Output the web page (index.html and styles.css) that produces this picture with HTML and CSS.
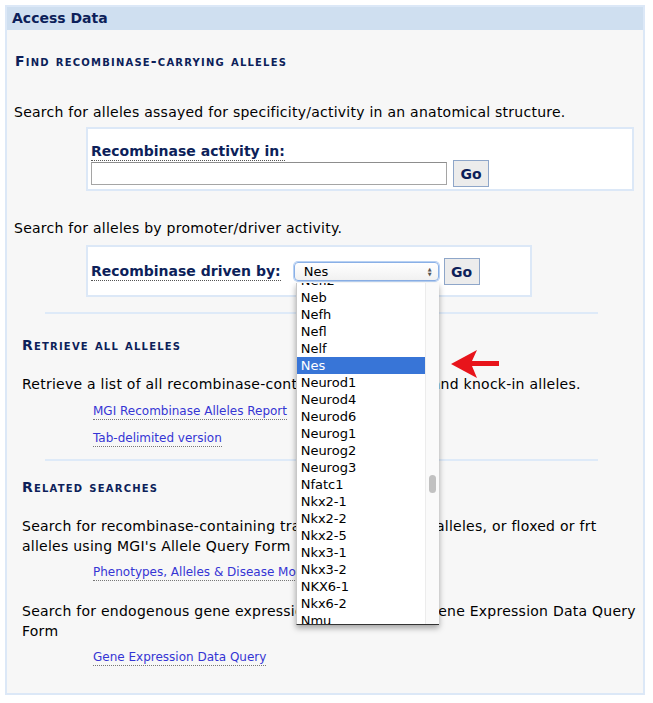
FILE: index.html
```html
<!DOCTYPE html>
<html>
<head>
<meta charset="utf-8">
<link rel="stylesheet" href="styles.css">
</head>
<body>
<div class="panel">
  <div class="panel-head">Access Data</div>
  <div class="panel-body">
    <div class="section first">
      <h3 class="sc">Find recombinase-carrying alleles</h3>
      <p class="para p1">Search for alleles assayed for specificity/activity in an anatomical structure.</p>
      <div class="qbox box1">
        <div class="lbl">Recombinase activity in:</div>
        <div class="row">
          <span class="textin"></span>
          <span class="btn">Go</span>
        </div>
      </div>
      <p class="para p2">Search for alleles by promoter/driver activity.</p>
      <div class="qbox box2">
        <div class="row">
          <span class="lbl inline">Recombinase driven by:</span>
          <span class="selwrap">
            <span class="select"><span class="selval">Nes</span><span class="updown">&#9650;<br>&#9660;</span></span>
            <span class="popup">
              <span class="list">
                <span class="opt">Nefl2</span>
                <span class="opt">Neb</span>
                <span class="opt">Nefh</span>
                <span class="opt">Nefl</span>
                <span class="opt">Nelf</span>
                <span class="opt sel">Nes</span>
                <span class="opt">Neurod1</span>
                <span class="opt">Neurod4</span>
                <span class="opt">Neurod6</span>
                <span class="opt">Neurog1</span>
                <span class="opt">Neurog2</span>
                <span class="opt">Neurog3</span>
                <span class="opt">Nfatc1</span>
                <span class="opt">Nkx2-1</span>
                <span class="opt">Nkx2-2</span>
                <span class="opt">Nkx2-5</span>
                <span class="opt">Nkx3-1</span>
                <span class="opt">Nkx3-2</span>
                <span class="opt">NKX6-1</span>
                <span class="opt">Nkx6-2</span>
                <span class="opt">Nmu</span>
              </span>
              <span class="track"><span class="thumb"></span></span>
            </span>
            <svg class="arrow" width="48" height="28" viewBox="0 0 48 28"><polygon points="0,14 26,0 21,11 48,11 48,16 21,16 26,28" fill="#e8141b"/></svg>
          </span>
          <span class="btn">Go</span>
        </div>
      </div>
    </div>
    <div class="divider"></div>
    <div class="section">
      <h3 class="sc">Retrieve all alleles</h3>
      <p class="para p3">Retrieve a list of all recombinase-containing transgenes and knock-in alleles.</p>
      <div class="links l1">
        <a class="lnk">MGI Recombinase Alleles Report</a>
        <a class="lnk">Tab-delimited version</a>
      </div>
    </div>
    <div class="divider d2"></div>
    <div class="section">
      <h3 class="sc">Related searches</h3>
      <p class="para p4">Search for recombinase-containing transgenes, knock-in alleles, or floxed or frt alleles using MGI's Allele Query Form</p>
      <div class="links">
        <a class="lnk">Phenotypes, Alleles &amp; Disease Models Search</a>
      </div>
      <p class="para p5">Search for endogenous gene expression data using the Gene Expression Data Query Form</p>
      <div class="links">
        <a class="lnk">Gene Expression Data Query</a>
      </div>
    </div>
  </div>
</div>
</body>
</html>
```
FILE: styles.css
```css
* { box-sizing: border-box; }
body {
  margin: 0;
  background: #ffffff;
  font-family: "DejaVu Sans", Verdana, sans-serif;
  color: #111;
}
.panel {
  margin: 5px 0 0 5px;
  width: 640px;
  height: 690px;
  border: 2px solid #dce8f7;
  background: #f7f7f7;
}
.panel-head {
  height: 23px;
  background: #cfdff0;
  color: #0d1f5a;
  font-weight: bold;
  font-size: 14px;
  line-height: 23px;
  padding-left: 5px;
}
.panel-body { padding: 0 7px; }
.section { padding-left: 8px; }
.section.first { padding-left: 1px; }
h3.sc {
  margin: 0;
  font-variant: small-caps;
  font-size: 14px;
  line-height: 17px;
  font-weight: bold;
  color: #0d1f5a;
  letter-spacing: 1.2px;
}
.first h3.sc { margin-top: 23px; }
.para {
  margin: 0;
  font-size: 14px;
  line-height: 20px;
  letter-spacing: 0.25px;
  color: #000;
}
.p1 { margin-top: 32px; margin-left: -1px; }
.qbox {
  margin-left: 71px;
  border: 2px solid #dce8f7;
  background: #ffffff;
  padding-left: 3px;
}
.box1 { margin-top: 5px; width: 548px; height: 64px; padding-top: 12px; }
.box2 { margin-top: 7px; width: 446px; height: 52px; padding-top: 11px; }
.lbl {
  font-weight: bold;
  font-size: 14px;
  color: #0d1f5a;
  display: inline-block;
  line-height: 17px;
  border-bottom: 1px dotted #555;
}
.row { display: flex; align-items: center; }
.box1 .row { margin-top: -1px; }
.textin {
  width: 356px;
  height: 23px;
  background: #fff;
  border: 1px solid #a5a5a5;
  border-top-color: #8d8d8d;
}
.btn {
  display: inline-flex;
  align-items: center;
  justify-content: center;
  width: 36px;
  height: 27px;
  margin-left: 5px;
  background: #ececec;
  border: 1px solid #8ea6c9;
  font-weight: bold;
  font-size: 14px;
  color: #0d1f5a;
}
.box1 .btn { margin-left: 6px; }
.p2 { margin-top: 27px; margin-left: -1px; }
.lbl.inline { margin-right: 13px; }
.selwrap { position: relative; display: inline-block; }
.select {
  display: flex;
  align-items: center;
  width: 145px;
  height: 19px;
  border: 1px solid #8ab0e6;
  border-radius: 4px;
  box-shadow: 0 0 0 1px #b8d1f3;
  background: linear-gradient(#ffffff, #f1f1f1);
  font-size: 13px;
  color: #000;
  padding-left: 9px;
  position: relative;
}
.selval { flex: 1; }
.updown {
  font-size: 5px;
  line-height: 5px;
  color: #555;
  margin-right: 6px;
  text-align: center;
}
.popup {
  position: absolute;
  left: 2px;
  top: 21px;
  width: 143px;
  height: 342px;
  background: #fff;
  overflow: hidden;
  box-shadow: 0 3px 6px rgba(0,0,0,0.35);
  border-left: 1px solid #c8c8c8;
  border-bottom: 1px solid #333;
  display: flex;
  z-index: 5;
}
.list {
  flex: 1;
  display: flex;
  flex-direction: column;
  margin-top: -11px;
}
.opt {
  display: block;
  height: 17px;
  line-height: 17px;
  font-size: 13px;
  padding-left: 4px;
  color: #000;
  white-space: nowrap;
}
.opt.sel { background: #3875d7; color: #fff; }
.track {
  width: 14px;
  background: #fafafa;
  border-left: 1px solid #ececec;
  position: relative;
}
.thumb {
  position: absolute;
  left: 3px;
  top: 192px;
  width: 7px;
  height: 18px;
  border-radius: 4px;
  background: #c1c1c1;
}
.arrow {
  position: absolute;
  left: 157px;
  top: 88px;
  z-index: 6;
}
.divider {
  margin: 15px 0 0 31px;
  width: 553px;
  height: 2px;
  background: #deeaf8;
}
.divider.d2 { margin-top: 12px; }
.section:not(.first) h3.sc { margin-top: 23px; }
.p3 { margin-top: 20px; }
.links {
  padding-left: 71px;
  display: flex;
  flex-direction: column;
  align-items: flex-start;
}
.lnk {
  font-size: 12px;
  color: #3535d4;
  line-height: 16px;
  border-bottom: 1px dotted #777;
  margin-top: 8px;
}
.l1 .lnk { margin-top: 9px; }
.l1 .lnk + .lnk { margin-top: 10px; }
.d2 + .section h3.sc { margin-top: 18px; }
.p4 { margin-top: 20px; }
.p5 { margin-top: 20px; }
```
